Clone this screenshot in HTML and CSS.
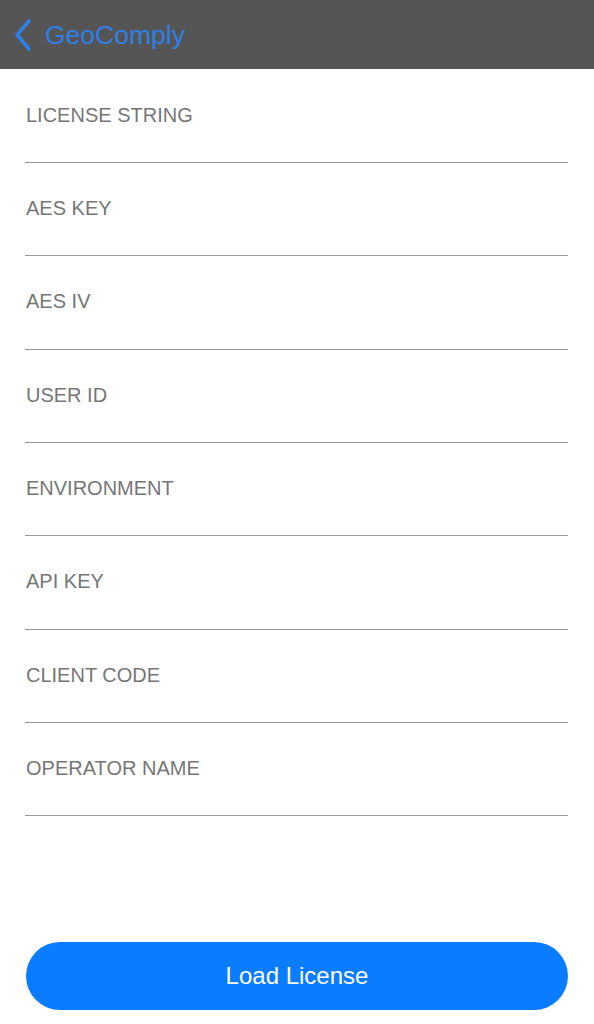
FILE: index.html
```html
<!DOCTYPE html>
<html>
<head>
<meta charset="utf-8">
<link rel="stylesheet" href="styles.css">
</head>
<body>
<div class="screen">
  <header class="nav">
    <svg class="back" width="20" height="34" viewBox="0 0 20 34"><path d="M16 3 L4 17 L16 31" fill="none" stroke="#2f80e6" stroke-width="3.6" stroke-linecap="round" stroke-linejoin="round"/></svg>
    <span class="title">GeoComply</span>
  </header>
  <main class="form">
    <div class="field"><span class="label">LICENSE STRING</span></div>
    <div class="field"><span class="label">AES KEY</span></div>
    <div class="field"><span class="label">AES IV</span></div>
    <div class="field"><span class="label">USER ID</span></div>
    <div class="field"><span class="label">ENVIRONMENT</span></div>
    <div class="field"><span class="label">API KEY</span></div>
    <div class="field"><span class="label">CLIENT CODE</span></div>
    <div class="field"><span class="label">OPERATOR NAME</span></div>
  </main>
  <div class="actions">
    <button class="load">Load License</button>
  </div>
</div>
</body>
</html>
```
FILE: styles.css
```css
html, body {
  margin: 0;
  padding: 0;
  background: #ffffff;
}
.screen {
  width: 594px;
  height: 1024px;
  display: flex;
  flex-direction: column;
  font-family: "Liberation Sans", Arial, sans-serif;
}
.nav {
  height: 69px;
  background: #555555;
  display: flex;
  align-items: center;
  padding-left: 13px;
  box-sizing: border-box;
  gap: 12px;
}
.back {
  display: block;
  margin-top: 1px;
}
.title {
  color: #2f80e6;
  font-size: 26.5px;
  line-height: 30px;
  margin-top: 1px;
}
.form {
  display: flex;
  flex-direction: column;
  margin: 0 26px 0 25px;
  padding-top: 0.8px;
}
.field {
  height: 93.3px;
  box-sizing: border-box;
  padding-top: 33px;
  padding-left: 1px;
  border-bottom: 1.4px solid #9a9a9a;
}
.label {
  display: block;
  font-size: 20px;
  line-height: 24px;
  color: #767676;
}
.actions {
  margin-top: auto;
  padding: 0 26px 14px 26px;
}
.load {
  width: 100%;
  height: 68px;
  border: none;
  border-radius: 34px;
  background: #0a7cff;
  color: #ffffff;
  font-family: "Liberation Sans", Arial, sans-serif;
  font-size: 24px;
  display: block;
  padding: 0;
}
```
